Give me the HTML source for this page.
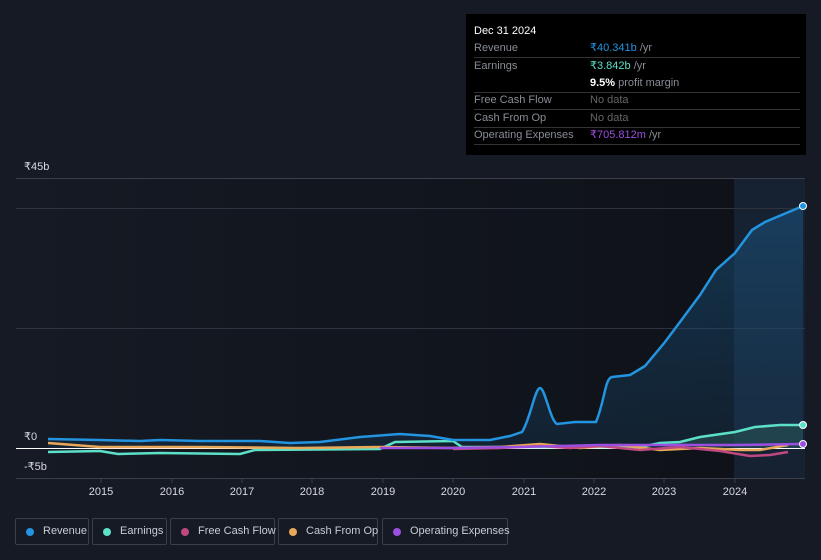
<!DOCTYPE html>
<html><head><meta charset="utf-8"><style>
body{margin:0;width:821px;height:560px;background:#151a24;font-family:"Liberation Sans",sans-serif;overflow:hidden;position:relative}
.tip{position:absolute;left:466px;top:14px;width:340px;height:141px;background:#000;color:#888d96;font-size:11px}
.tip .r{position:absolute;left:8px;right:6px;height:17px;border-bottom:1px solid #333;line-height:17px}
.tip .v{position:absolute;left:116px}
.leg{position:absolute;top:518px;height:27px;border:1px solid #3a3f4a;border-radius:2px;color:#c8ccd3;font-size:11px;line-height:25px;box-sizing:border-box;white-space:nowrap}
.leg i{position:absolute;left:10px;top:9px;width:8px;height:8px;border-radius:50%}
.leg span{position:absolute;left:27px}
</style></head><body>
<svg width="821" height="500" style="position:absolute;left:0;top:0">
<defs><linearGradient id="bg" x1="0" x2="1"><stop offset="0" stop-color="#151a24"/><stop offset="1" stop-color="#0e1117"/></linearGradient>
<linearGradient id="rf" x1="0" y1="0" x2="0" y2="1"><stop offset="0" stop-color="#1a5a8a" stop-opacity=".5"/><stop offset="1" stop-color="#1a4a70" stop-opacity=".25"/></linearGradient></defs>
<rect x="16" y="178" width="789" height="300" fill="url(#bg)"/>
<rect x="734" y="178" width="71" height="300" fill="#162232"/>
<line x1="16" y1="178.5" x2="805" y2="178.5" stroke="#3a3f4a"/>
<line x1="16" y1="208.5" x2="805" y2="208.5" stroke="#2e333d"/>
<line x1="16" y1="328.5" x2="805" y2="328.5" stroke="#2e333d"/>
<line x1="16" y1="478.5" x2="805" y2="478.5" stroke="#3a3f4a"/>
<line x1="16" y1="448.5" x2="805" y2="448.5" stroke="#fff"/>
<g stroke="#3a3f4a"><line x1="101" y1="478" x2="101" y2="483"/><line x1="172" y1="478" x2="172" y2="483"/><line x1="242" y1="478" x2="242" y2="483"/><line x1="312" y1="478" x2="312" y2="483"/><line x1="383" y1="478" x2="383" y2="483"/><line x1="453" y1="478" x2="453" y2="483"/><line x1="524" y1="478" x2="524" y2="483"/><line x1="594" y1="478" x2="594" y2="483"/><line x1="664" y1="478" x2="664" y2="483"/><line x1="735" y1="478" x2="735" y2="483"/></g>
<g fill="#d6d9de" font-size="11" text-anchor="middle"><text x="101" y="495">2015</text><text x="172" y="495">2016</text><text x="242" y="495">2017</text><text x="312" y="495">2018</text><text x="383" y="495">2019</text><text x="453" y="495">2020</text><text x="524" y="495">2021</text><text x="594" y="495">2022</text><text x="664" y="495">2023</text><text x="735" y="495">2024</text></g>
<g fill="#d6d9de" font-size="11"><text x="24" y="170">₹45b</text><text x="24" y="440">₹0</text><text x="24" y="470">-₹5b</text></g>
<path d="M48 439 L100 440 L140 441 L160 440 L200 441 L260 441 L290 443 L320 442 L360 437 L400 434 L430 436 L453 440 L490 440 L510 436 L522 432 C530 420 535 388 540 388 C545 388 550 420 557 424 L575 422 L596 422 C605 400 605 378 612 377 L630 375 L645 366 L665 342 L680 322 L700 295 L716 270 L735 253 L752 230 L765 222 L803 206 L803 448 L48 448Z" fill="url(#rf)"/>
<path d="M803 425 L780 425 L755 427 L735 432 L700 437 L680 442 L660 447 L803 448Z" fill="#2a5a5a" opacity=".5"/>
<path d="M48 452 L100 451 L118 454 L160 453 L240 454 L255 450 L380 449 L395 442 L453 441 L462 447 L640 447 L660 443 L680 442 L700 437 L735 432 L755 427 L780 425 L803 425" fill="none" stroke="#5ce0c8" stroke-width="2.5"/>
<path d="M48 443 L100 447 L200 447 L300 448 L380 447 L450 448 L500 447 L540 444 L580 448 L620 445 L660 450 L700 448 L740 450 L760 450 L788 445" fill="none" stroke="#e8a85a" stroke-width="2.5"/>
<path d="M453 449 L500 448 L540 446 L570 448 L600 446 L640 450 L680 447 L720 451 L750 456 L770 455 L788 452" fill="none" stroke="#c04880" stroke-width="2.5"/>
<path d="M380 448 L453 448 L520 447 L600 445 L680 445 L735 445 L803 444" fill="none" stroke="#9b4fe0" stroke-width="2.5"/>
<path d="M48 439 L100 440 L140 441 L160 440 L200 441 L260 441 L290 443 L320 442 L360 437 L400 434 L430 436 L453 440 L490 440 L510 436 L522 432 C530 420 535 388 540 388 C545 388 550 420 557 424 L575 422 L596 422 C605 400 605 378 612 377 L630 375 L645 366 L665 342 L680 322 L700 295 L716 270 L735 253 L752 230 L765 222 L803 206" fill="none" stroke="#2394df" stroke-width="2.5"/>
<circle cx="803" cy="206" r="3.5" fill="#2394df" stroke="#fff"/>
<circle cx="803" cy="425" r="3.5" fill="#5ce0c8" stroke="#fff"/>
<circle cx="803" cy="444" r="3.5" fill="#9b4fe0" stroke="#fff"/>
</svg>
<div class="tip">
<div style="position:absolute;left:8px;top:11px;color:#fff">Dec 31 2024</div>
<div class="r" style="top:26px">Revenue<span class="v"><b style="color:#2394df;font-weight:normal">₹40.341b</b> /yr</span></div>
<div class="r" style="top:44px;border:0">Earnings<span class="v"><b style="color:#5ce0c8;font-weight:normal">₹3.842b</b> /yr</span></div>
<div class="r" style="top:61px"><span class="v"><b style="color:#fff">9.5%</b> profit margin</span></div>
<div class="r" style="top:78px">Free Cash Flow<span class="v" style="color:#666">No data</span></div>
<div class="r" style="top:96px">Cash From Op<span class="v" style="color:#666">No data</span></div>
<div class="r" style="top:113px">Operating Expenses<span class="v"><b style="color:#9b4fe0;font-weight:normal">₹705.812m</b> /yr</span></div>
</div>
<div class="leg" style="left:15px;width:74px"><i style="background:#2394df"></i><span>Revenue</span></div>
<div class="leg" style="left:92px;width:75px"><i style="background:#5ce0c8"></i><span>Earnings</span></div>
<div class="leg" style="left:170px;width:105px"><i style="background:#c04880"></i><span>Free Cash Flow</span></div>
<div class="leg" style="left:278px;width:100px"><i style="background:#e8a85a"></i><span>Cash From Op</span></div>
<div class="leg" style="left:382px;width:126px"><i style="background:#9b4fe0"></i><span>Operating Expenses</span></div>
</body></html>
